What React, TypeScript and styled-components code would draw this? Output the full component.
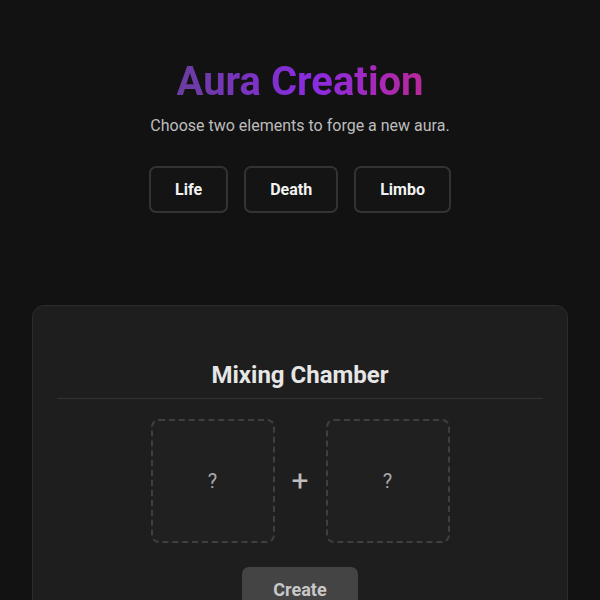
import React, { useState } from "react";
import styled, { createGlobalStyle } from "styled-components";

const GlobalStyle = createGlobalStyle`
  * { box-sizing: border-box; }
  html, body {
    margin: 0;
    padding: 0;
    background: #121212;
    color: #e0e0e0;
    font-family: Roboto, "Noto Sans", "Liberation Sans", sans-serif;
  }
`;

const Page = styled.div`
  min-height: 600px;
  padding: 59px 32px 0;
  display: flex;
  flex-direction: column;
  align-items: center;
`;

const Title = styled.h1`
  margin: 0;
  font-size: 40px;
  font-weight: 700;
  line-height: 46px;
  background: linear-gradient(90deg, #6a3d9e, #8a2be2 55%, #b8289a);
  -webkit-background-clip: text;
  background-clip: text;
  color: transparent;
`;

const Subtitle = styled.p`
  margin: 11px 0 0;
  font-size: 16px;
  line-height: 19px;
  color: #bdbdbd;
`;

const ElementRow = styled.div`
  display: flex;
  gap: 16px;
  margin-top: 31px;
`;

const ElementButton = styled.button<{ $selected?: boolean }>`
  padding: 12px 24px;
  font-family: inherit;
  font-size: 16px;
  font-weight: 700;
  line-height: 19px;
  color: #f2f2f2;
  background: #141414;
  border: 2px solid ${(p) => (p.$selected ? "#8a2be2" : "#333")};
  border-radius: 7px;
  cursor: pointer;
`;

const Chamber = styled.section`
  width: 100%;
  margin-top: 92px;
  padding: 55px 24px 24px;
  background: #1e1e1e;
  border: 1px solid #2c2c2c;
  border-radius: 12px;
  display: flex;
  flex-direction: column;
  align-items: center;
`;

const ChamberTitle = styled.h2`
  width: 100%;
  margin: 0;
  padding-bottom: 9px;
  border-bottom: 1px solid #333;
  text-align: center;
  font-size: 24px;
  font-weight: 700;
  line-height: 28px;
  color: #e6e6e6;
`;

const SlotRow = styled.div`
  display: flex;
  align-items: center;
  gap: 16px;
  margin-top: 20px;
`;

const Slot = styled.div`
  width: 124px;
  height: 124px;
  border: 2px dashed #3f3f3f;
  border-radius: 8px;
  background: #202020;
  display: flex;
  align-items: center;
  justify-content: center;
  font-size: 20px;
  color: #a8a8a8;
`;

const Plus = styled.span`
  font-size: 30px;
  line-height: 1;
  color: #bdbdbd;
  width: 19px;
  text-align: center;
`;

const CreateButton = styled.button`
  margin-top: 24px;
  padding: 12px 31px;
  font-family: inherit;
  font-size: 18px;
  font-weight: 700;
  line-height: 21px;
  color: #c8c8c8;
  background: #444;
  border: none;
  border-radius: 7px;
  cursor: not-allowed;
`;

const elements = ["Life", "Death", "Limbo"];

export default function App() {
  const [picked, setPicked] = useState<string[]>([]);

  const toggle = (name: string) => {
    setPicked((prev) =>
      prev.includes(name)
        ? prev.filter((p) => p !== name)
        : prev.length < 2
        ? [...prev, name]
        : prev
    );
  };

  return (
    <>
      <GlobalStyle />
      <Page>
        <Title>Aura Creation</Title>
        <Subtitle>Choose two elements to forge a new aura.</Subtitle>
        <ElementRow>
          {elements.map((el) => (
            <ElementButton
              key={el}
              $selected={picked.includes(el)}
              onClick={() => toggle(el)}
            >
              {el}
            </ElementButton>
          ))}
        </ElementRow>

        <Chamber>
          <ChamberTitle>Mixing Chamber</ChamberTitle>
          <SlotRow>
            <Slot>{picked[0] ?? "?"}</Slot>
            <Plus>+</Plus>
            <Slot>{picked[1] ?? "?"}</Slot>
          </SlotRow>
          <CreateButton disabled={picked.length < 2}>Create</CreateButton>
        </Chamber>
      </Page>
    </>
  );
}
